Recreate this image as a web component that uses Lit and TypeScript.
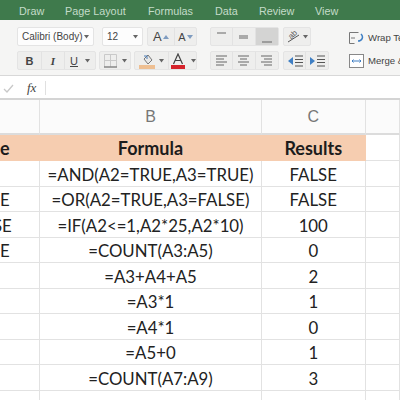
import { LitElement, html, css, svg } from "lit";
import { customElement } from "lit/decorators.js";

const rows: [string, string, string][] = [
  ["", "=AND(A2=TRUE,A3=TRUE)", "FALSE"],
  ["E", "=OR(A2=TRUE,A3=FALSE)", "FALSE"],
  ["SE", "=IF(A2<=1,A2*25,A2*10)", "100"],
  ["E", "=COUNT(A3:A5)", "0"],
  ["", "=A3+A4+A5", "2"],
  ["", "=A3*1", "1"],
  ["", "=A4*1", "0"],
  ["", "=A5+0", "1"],
  ["", "=COUNT(A7:A9)", "3"],
];

const lines = (l: [number, number, number][], color = "#666", w = 1) =>
  html`<svg width="20" height="18" viewBox="0 0 20 18" fill="none" stroke=${color} stroke-width=${w}>
    ${l.map(([y, a, b]) => svg`<line x1=${a} x2=${b} y1=${y} y2=${y}></line>`)}
  </svg>`;

const caret = html`<svg class="caret" width="5" height="4" viewBox="0 0 5 4"><path d="M0 0h5L2.5 3.6z" fill="#666"></path></svg>`;

@customElement("app-root")
export class AppRoot extends LitElement {
  static styles = css`
    :host { display: block; width: 400px; height: 400px; overflow: hidden; background: #fff; font-family: "Liberation Sans", Arial, sans-serif; }
    .tabs { height: 20px; box-sizing: border-box; padding-top: 2px; background: #3f7a4c; color: #c4dcc9; font-size: 10.8px; display: flex; align-items: center; padding-left: 19px; white-space: nowrap; }
    .tabs span { display: block; }
    .ribbon { height: 56px; background: #f5f5f4; border-bottom: 1px solid #d8d8d8; box-sizing: border-box; padding: 7px 0 0 17px; display: flex; }
    .sec { display: flex; flex-direction: column; gap: 5px; }
    .r { display: flex; height: 19px; gap: 3px; }
    .box { background: #fdfdfd; border: 1px solid #e4e4e4; border-radius: 2px; box-sizing: border-box; height: 19px; display: flex; align-items: center; justify-content: space-between; padding: 0 4px; font-size: 10px; color: #444; white-space: nowrap; }
    .seg { background: #eeeeed; border: 1px solid #e4e4e4; border-radius: 2px; box-sizing: border-box; height: 19px; display: flex; }
    .seg > div { display: flex; align-items: center; justify-content: center; border-right: 1px solid #e2e2e2; box-sizing: border-box; font-size: 11px; color: #444; gap: 4px; }
    .seg > div:last-child { border-right: 0; }
    .on { background: #d4d4d3; }
    .divider { width: 1px; height: 50px; background: #dcdcdc; }
    .wrap { display: flex; flex-direction: column; gap: 8px; margin-left: 13px; padding-top: 3px; font-size: 9.6px; color: #444; white-space: nowrap; }
    .wrap div { display: flex; align-items: center; gap: 4px; height: 15px; }
    .gap { height: 2px; background: #fff; }
    .fbar { height: 20px; background: #fff; display: flex; align-items: center; border-bottom: 2px solid #d4d4d4; }
    .check { width: 27px; padding-left: 3px; box-sizing: border-box; display: flex; }
    .fx { width: 18px; font: italic 13px "Liberation Serif", serif; color: #444; }
    .fsep { width: 1px; height: 14px; background: #e0e0e0; }
    .grid { display: grid; grid-template-columns: 40px 222px 103.5px 34.5px; grid-template-rows: 35px 26px repeat(10, 25.5px); font-family: Lato, sans-serif; font-size: 16.8px; color: #222; }
    .c { border-right: 1px solid #e2e2e2; border-bottom: 1px solid #e2e2e2; box-sizing: border-box; display: flex; align-items: center; justify-content: center; white-space: nowrap; overflow: hidden; }
    .c.left { justify-content: flex-start; }
    .d { padding-top: 2px; }
    .se { margin-left: -7px; }
    .h { color: #777; font-size: 16px; background: #fbfbfb; border-bottom: 2px solid #dcdcdc; font-family: "Liberation Sans", sans-serif; padding-top: 1px; }
    .t { background: #f6cdb0; border-color: #f6cdb0; font-weight: 700; color: #1c1c1c; font-size: 18px; }
    .t.blank { background: #fff; border-color: #e2e2e2; }
  `;

  render() {
    return html`
      <div class="tabs">
        <span style="width:46px">Draw</span><span style="width:83px">Page Layout</span><span style="width:67px">Formulas</span><span style="width:44px">Data</span><span style="width:56px">Review</span><span>View</span>
      </div>
      <div class="ribbon">
        <div class="sec" style="width:180px">
          <div class="r">
            <div class="box" style="width:79px">Calibri (Body) ${caret}</div>
            <div class="box" style="width:42px;margin-left:5px">12 ${caret}</div>
            <div class="seg" style="width:50px;margin-left:1px">
              <div style="width:28px;font-size:13px;gap:1px">A<svg width="6" height="4"><path d="M0 4L3 0l3 4z" fill="#7f9cc0"></path></svg></div>
              <div style="width:22px;gap:1px">A<svg width="6" height="4"><path d="M0 0h6L3 4z" fill="#7f9cc0"></path></svg></div>
            </div>
          </div>
          <div class="r">
            <div class="seg" style="width:79px">
              <div style="width:24px;font-weight:700">B</div>
              <div style="width:23px;font:italic 700 11px 'Liberation Serif',serif">I</div>
              <div style="flex:1;gap:7px"><span style="text-decoration:underline">U</span>${caret}</div>
            </div>
            <div class="seg" style="width:32px">
              <div style="flex:1;gap:4px">
                <svg width="15" height="15" viewBox="0 0 15 15" fill="none" stroke="#c9c9c9"><path d="M1.5 1.5h12v12M1.500 1.500v12M7.500 1.500v12M1.500 7.500h12"></path><path d="M1 14h13" stroke="#555"></path></svg>${caret}
              </div>
            </div>
            <div class="seg" style="width:63px">
              <div style="width:34px;gap:4px">
                <svg width="16" height="16" viewBox="0 0 16 16"><path d="M5 6l4-4 4 5-4 4z" fill="#e8e8e8" stroke="#777"></path><path d="M5 3h3v3" stroke="#4d7fb8" fill="none"></path><rect x="0" y="12" width="16" height="4" fill="#eebf92"></rect></svg>${caret}
              </div>
              <div style="flex:1;gap:5px">
                <svg width="16" height="16" viewBox="0 0 16 16"><path d="M3.500 11L8 1l4.500 10M5.500 7.500h5" fill="none" stroke="#444" stroke-width="1.2"></path><rect x="1" y="12" width="14" height="4" fill="#d5232b"></rect></svg>${caret}
              </div>
            </div>
          </div>
        </div>
        <div class="divider" style="margin:0 7px 0 6px"></div>
        <div class="sec" style="width:120px">
          <div class="r" style="gap:4px">
            <div class="seg" style="width:69px">
              <div style="width:23px">${lines([[5, 5, 14]])}</div>
              <div style="width:23px">${lines([[8, 5, 14], [10, 5, 14]])}</div>
              <div class="on" style="width:23px">${lines([[14, 5, 15]])}</div>
            </div>
            <div class="seg" style="width:28px">
              <div style="flex:1;gap:2px">
                <svg width="15" height="15" viewBox="0 0 15 15" fill="none" stroke="#555"><text x="3" y="9" font-size="8" fill="#555" stroke="none" transform="rotate(-45 6 7)">ab</text><path d="M2 13L13 6"></path></svg>${caret}
              </div>
            </div>
          </div>
          <div class="r" style="gap:4px">
            <div class="seg" style="width:69px">
              <div style="width:23px">${lines([[4, 4, 15], [7, 4, 12], [10, 4, 15], [13, 4, 12]])}</div>
              <div style="width:23px">${lines([[4, 4, 15], [7, 6, 13], [10, 4, 15], [13, 6, 13]])}</div>
              <div style="width:23px">${lines([[4, 4, 15], [7, 7, 15], [10, 4, 15], [13, 7, 15]])}</div>
            </div>
            <div class="seg" style="width:46px">
              <div style="width:23px">
                <svg width="16" height="14" viewBox="0 0 16 14"><path d="M1 7l5-4v8z" fill="#3f7fc4"></path><path d="M8 2h8M8 5.500h8M8 8.500h8M8 12h8" stroke="#555"></path></svg>
              </div>
              <div style="width:23px">
                <svg width="16" height="14" viewBox="0 0 16 14"><path d="M6 7L1 3v8z" fill="#3f7fc4"></path><path d="M8 2h8M8 5.500h8M8 8.500h8M8 12h8" stroke="#555"></path></svg>
              </div>
            </div>
          </div>
        </div>
        <div class="divider" style="margin-left:7px"></div>
        <div class="wrap">
          <div>
            <svg width="15" height="12" viewBox="0 0 15 12" fill="none"><path d="M.5.5h9M.5 11.500h5M.5.5v11" stroke="#777"></path><path d="M2 6h4" stroke="#777"></path><path d="M12 2c3 3 1 7-3 7" stroke="#3f7fc4" stroke-width="1.5"></path></svg>
            <span>Wrap Text</span>
          </div>
          <div>
            <svg width="15" height="14" viewBox="0 0 15 14" fill="#fff" stroke="#888"><rect x=".5" y=".5" width="14" height="13"></rect><path d="M3 7h9M4.500 5.500L3 7l1.500 1.500M10.500 5.500L12 7l-1.500 1.500" stroke="#3f7fc4" fill="none"></path></svg>
            <span>Merge &amp; Center</span>
          </div>
        </div>
      </div>
      <div class="gap"></div>
      <div class="fbar">
        <div class="check"><svg width="11" height="9" viewBox="0 0 11 9" fill="none" stroke="#c8c8c8" stroke-width="1.3"><path d="M1 5l3 3 6-7"></path></svg></div>
        <div class="fx">fx</div>
        <div class="fsep"></div>
      </div>
      <div class="grid">
        <div class="c h"></div><div class="c h">B</div><div class="c h">C</div><div class="c h"></div>
        <div class="c t left">e</div><div class="c t">Formula</div><div class="c t">Results</div><div class="c t blank"></div>
        ${rows.map(
          ([a, b, r]) => html`<div class="c d left">${a === "SE" ? html`<span class="se">${a}</span>` : a}</div><div class="c d">${b}</div><div class="c d">${r}</div><div class="c"></div>`
        )}
        <div class="c"></div><div class="c"></div><div class="c"></div><div class="c"></div>
      </div>
    `;
  }
}
